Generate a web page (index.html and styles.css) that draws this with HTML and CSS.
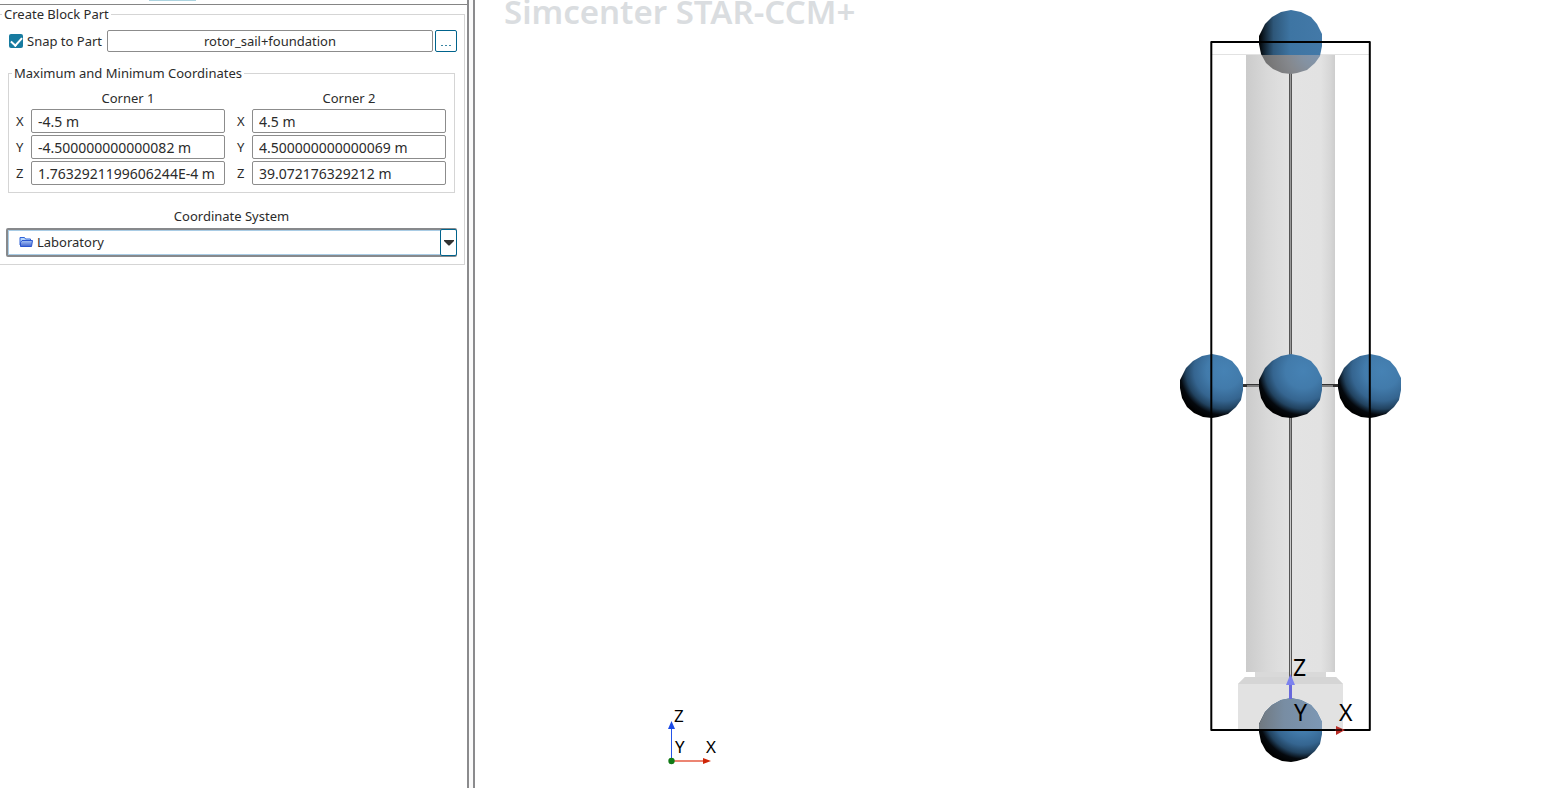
FILE: index.html
```html
<!DOCTYPE html>
<html lang="en">
<head>
<meta charset="utf-8">
<title>Simcenter STAR-CCM+</title>
<link rel="stylesheet" href="styles.css">
</head>
<body>
<div class="workspace">
  <section class="dock">
    <div class="tab-strip"><span class="active-tab"></span></div>
    <form class="editor">
      <fieldset class="group block-part">
        <legend>Create Block Part</legend>
        <div class="snap-row">
          <label class="snap"><input type="checkbox" checked><span>Snap to Part</span></label>
          <button type="button" class="part-name">rotor_sail+foundation</button>
          <button type="button" class="browse" aria-label="Choose part"><svg width="14" height="8" viewBox="0 0 14 8"><path d="M2 5.500h2M6 5.500h2M10 5.500h2" stroke="#3b86a3"/></svg></button>
        </div>
        <fieldset class="group coords">
          <legend>Maximum and Minimum Coordinates</legend>
          <div class="coord-grid">
            <span class="corner one">Corner 1</span>
            <span class="corner two">Corner 2</span>
            <label for="x1">X</label><input type="text" id="x1" value="-4.5 m">
            <label for="x2" class="second">X</label><input type="text" id="x2" value="4.5 m">
            <label for="y1">Y</label><input type="text" id="y1" value="-4.500000000000082 m">
            <label for="y2" class="second">Y</label><input type="text" id="y2" value="4.500000000000069 m">
            <label for="z1">Z</label><input type="text" id="z1" value="1.7632921199606244E-4 m">
            <label for="z2" class="second">Z</label><input type="text" id="z2" value="39.072176329212 m">
          </div>
        </fieldset>
        <label for="system" class="system-label">Coordinate System</label>
        <div class="combo">
          <select id="system"><option>Laboratory</option></select>
          <svg class="folder" width="14" height="12" viewBox="0 0 14 12">
            <path d="M1 9V1.500h4.500l1 1.500H11.500V5" fill="#b9d7fb" stroke="#2f62d9"/>
            <path d="M1.500 10.500V6.500L3 4.500H13.500L12.500 10.500Z" fill="url(#folderFill)" stroke="#2b55cf"/>
            <defs><linearGradient id="folderFill" x1="0" y1="0" x2="0" y2="1"><stop offset="0" stop-color="#a9c5f6"/><stop offset="1" stop-color="#3f62cf"/></linearGradient></defs>
          </svg>
          <span class="arrow"><svg width="10" height="6" viewBox="0 0 10 6"><path d="M0 0H10V1L5.500 5.500H4.500L0 1Z" fill="#333"/></svg></span>
        </div>
      </fieldset>
    </form>
  </section>
  <div class="splitter"></div>
  <main class="viewport">
    <svg class="scene" viewBox="475 0 1080 788" preserveAspectRatio="xMidYMin meet" role="img" aria-label="3D scene">
      <defs>
        <radialGradient id="ball" gradientUnits="userSpaceOnUse" cx="12" cy="-15" r="50">
          <stop offset="0" stop-color="#4682b4"/><stop offset=".35" stop-color="#427bab"/>
          <stop offset=".6" stop-color="#356590"/><stop offset=".76" stop-color="#21425f"/>
          <stop offset=".88" stop-color="#05090e"/><stop offset="1" stop-color="#000"/>
        </radialGradient>
        <linearGradient id="topBall" x1="0" y1="0" x2="1" y2="0">
          <stop offset="0" stop-color="#000"/><stop offset=".08" stop-color="#10202d"/><stop offset=".23" stop-color="#2e5779"/><stop offset=".5" stop-color="#3e75a3"/><stop offset="1" stop-color="#4379a8"/>
        </linearGradient>
        <radialGradient id="veiled" gradientUnits="userSpaceOnUse" cx="27" cy="8" r="58">
          <stop offset="0" stop-color="#8097b2"/><stop offset=".3" stop-color="#8492a2"/><stop offset=".55" stop-color="#85888d"/><stop offset=".8" stop-color="#7a7a7b"/><stop offset="1" stop-color="#6d6d6d"/>
        </radialGradient>
        <linearGradient id="lowBall" x1="0" y1="0" x2="1" y2="0"><stop offset="0" stop-color="#70787f"/><stop offset=".4" stop-color="#788da3"/><stop offset="1" stop-color="#7c97b4"/></linearGradient>
        <linearGradient id="tube" x1="0" y1="0" x2="1" y2="0">
          <stop offset="0" stop-color="#cbcbcb"/><stop offset=".25" stop-color="#d9d9d9"/><stop offset=".5" stop-color="#e3e3e3"/><stop offset=".84" stop-color="#e2e2e2"/><stop offset=".95" stop-color="#d6d6d6"/><stop offset="1" stop-color="#cdcdcd"/>
        </linearGradient>
        <path id="hull" d="M0-32L10-30 20-25 26-18 31-8 31 4 29 14 24 21 16 28 6 31 0 32-9 31-18 27-25 21-30 12-32 2-32-6-30-10-26-18-19-25-10-30Z"/>
        <clipPath id="aboveSail"><rect x="1250" y="0" width="80" height="55"/></clipPath>
        <clipPath id="behindSail"><rect x="1250" y="55" width="80" height="30"/></clipPath>
        <clipPath id="aboveDeck"><rect x="1250" y="690" width="80" height="40"/></clipPath>
      </defs>
      <text x="504" y="24" class="watermark">Simcenter STAR-CCM+</text>
      <path d="M1212 54.500H1369" stroke="#e2e2e2"/>
      <rect x="1246" y="55" width="89" height="617" fill="url(#tube)"/>
      <path d="M1255 672H1326V678H1255Z" fill="#d9d9d9"/>
      <path d="M1245 677H1336L1343 684V730H1238V684Z" fill="#e2e2e2"/>
      <path d="M1245 677H1336L1343 684H1238Z" fill="#d5d5d5"/>
      <path d="M1289.500 70V700M1291.500 70V700" stroke="#555"/>
      <path d="M1290.500 70V355M1290.500 417V490" stroke="#999"/>
      <path d="M1290.500 490V676" stroke="#ccc"/>
      <path d="M1240 385.500H1340" stroke="#333" stroke-width="3"/>
      <path d="M1247 386H1259M1322 386H1333" stroke="#999" stroke-width="1.500"/>
      <g clip-path="url(#aboveSail)"><use href="#hull" transform="translate(1291 42)" fill="url(#topBall)"/></g>
      <g clip-path="url(#behindSail)"><use href="#hull" transform="translate(1291 42)" fill="url(#veiled)"/></g>
      <use href="#hull" transform="translate(1212 386)" fill="url(#ball)"/>
      <use href="#hull" transform="translate(1291 386)" fill="url(#ball)"/>
      <use href="#hull" transform="translate(1370 386)" fill="url(#ball)"/>
      <use href="#hull" transform="translate(1291 730)" fill="url(#ball)"/>
      <g clip-path="url(#aboveDeck)"><use href="#hull" transform="translate(1291 730)" fill="url(#lowBall)"/></g>
      <path d="M1211.300 42V730H1369.800V42Z" fill="none" stroke="#000" stroke-width="2" stroke-linejoin="round"/>
      <path d="M1290.500 682V699" stroke="#6868dc" stroke-width="3"/>
      <path d="M1290.500 674L1295 685H1286Z" fill="#7c82ee"/>
      <path d="M1336 726L1345 730L1336 735Z" fill="#b82b25"/>
      <path d="M1335 730H1342" stroke="#3c0907" stroke-width="2"/>
      <g class="axes-large"><text x="1293" y="676">Z</text><text x="1294" y="721">Y</text><text x="1339" y="721">X</text></g>
      <path d="M671.500 760V727" stroke="#2454e8"/>
      <path d="M671.500 721L675 729H668Z" fill="#1c4be6"/>
      <path d="M672 761H704" stroke="#e65c45" stroke-width="1.500"/>
      <path d="M703 758L711 761L703 764Z" fill="#cf2608"/>
      <circle cx="671.500" cy="761" r="3.200" fill="#117a16"/>
      <g class="axes-small"><text x="674" y="722">Z</text><text x="675" y="753">Y</text><text x="706" y="753">X</text></g>
    </svg>
  </main>
</div>
</body>
</html>
```
FILE: styles.css
```css
* { box-sizing: border-box; }
body { margin: 0; background: #fff; color: #2b2b2b; font: 13px/18px "Noto Sans", sans-serif; }
input, button, select { font: inherit; color: inherit; margin: 0; }
.workspace { display: grid; grid-template-columns: minmax(0, 467fr) 8px minmax(0, 1080fr); height: 100vh; overflow: hidden; }
.dock { display: flex; flex-direction: column; min-width: 0; }
.tab-strip { height: 5px; border-bottom: 1px solid #858585; padding-left: 32%; }
.active-tab { display: block; width: 47px; height: 1px; background: #acd3df; }
.splitter { border-left: 2px solid #8b8b8d; border-right: 2px solid #8b8b8d; background: #fafafa; }
.editor { padding-right: 2px; }
.group { margin: 0; border: 1px solid #d5d5d5; min-width: 0; }
.group legend { padding: 0 2px; line-height: 18px; }
.block-part { border-left: 0; padding: 7px 7px 7px 6px; }
.block-part > legend { margin-left: -4px; }
.snap-row { display: flex; align-items: center; gap: 2px; }
.snap { display: flex; align-items: center; gap: 4px; flex: none; width: 99px; padding-left: 3px; white-space: nowrap; }
.snap input {
  appearance: none; width: 14px; height: 14px; border-radius: 2px; background: #177ba0; flex: none;
  display: grid; place-items: center;
}
.snap input:checked::after { content: ""; width: 5px; height: 9px; margin-top: -2px; border: solid #fff; border-width: 0 2px 2px 0; transform: rotate(42deg); }
.part-name { flex: 1; min-width: 0; height: 22px; padding: 0; border: 1px solid #8c8c8c; border-radius: 2px; background: #fff; }
.browse { width: 22px; height: 22px; padding: 0; border: 1px solid #00638c; border-radius: 2px; background: #fff; display: grid; place-items: center; }
.browse svg { margin-top: 5px; }
.coords { margin: 12px 2px 0 2px; padding: 7px 8px 7px 7px; }
.coords legend { margin-left: -4px; }
.coord-grid { display: grid; grid-template-columns: 15px 1fr 27px 1fr; row-gap: 2px; align-items: center; }
.corner { text-align: center; line-height: 18px; }
.corner.one { grid-column: 2; }
.corner.two { grid-column: 4; }
.coord-grid .second { padding-left: 12px; }
.coord-grid input { width: 100%; min-width: 0; height: 24px; padding: 0 6px; border: 1px solid #8c8c8c; border-radius: 2px; background: #fff; font-size: 14px; }
.system-label { display: block; margin-top: 14px; text-align: center; }
.combo { position: relative; margin-top: 3px; }
.combo select {
  appearance: none; display: block; width: 100%; height: 29px; padding: 0 20px 1px 29px;
  border: 2px solid #87898c; border-radius: 2px; background: #fff; box-shadow: inset 0 0 0 1px #a9cce5;
}
.folder { position: absolute; left: 13px; top: 8px; pointer-events: none; }
.arrow { position: absolute; right: 0; top: 1px; bottom: 1px; width: 17px; display: grid; place-items: center; border: 1px solid #00638c; border-radius: 2px; background: #fff; pointer-events: none; }
.viewport { min-width: 0; overflow: hidden; }
.scene { display: block; width: 100%; height: 100%; font-family: "Noto Sans", sans-serif; }
.watermark { font-size: 33px; font-weight: 600; fill: #dadde0; }
.axes-large { font-size: 23px; fill: #000; }
.axes-small { font-size: 17px; fill: #000; }
```
